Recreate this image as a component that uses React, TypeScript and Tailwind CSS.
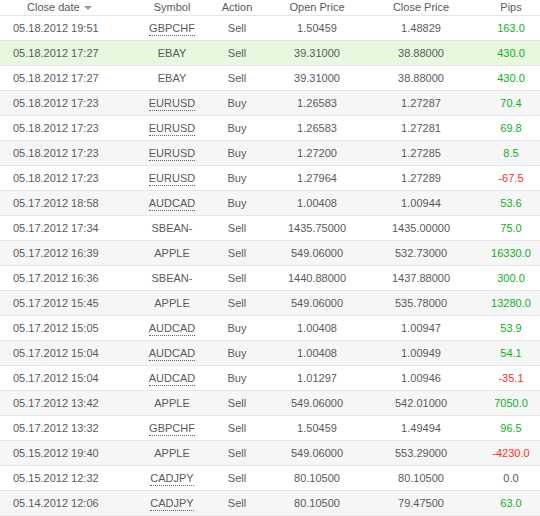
type Trade = {
  date: string;
  symbol: string;
  dotted: boolean;
  action: string;
  open: string;
  close: string;
  pips: string;
};

const trades: Trade[] = [
  { date: "05.18.2012 19:51", symbol: "GBPCHF", dotted: true, action: "Sell", open: "1.50459", close: "1.48829", pips: "163.0" },
  { date: "05.18.2012 17:27", symbol: "EBAY", dotted: false, action: "Sell", open: "39.31000", close: "38.88000", pips: "430.0" },
  { date: "05.18.2012 17:27", symbol: "EBAY", dotted: false, action: "Sell", open: "39.31000", close: "38.88000", pips: "430.0" },
  { date: "05.18.2012 17:23", symbol: "EURUSD", dotted: true, action: "Buy", open: "1.26583", close: "1.27287", pips: "70.4" },
  { date: "05.18.2012 17:23", symbol: "EURUSD", dotted: true, action: "Buy", open: "1.26583", close: "1.27281", pips: "69.8" },
  { date: "05.18.2012 17:23", symbol: "EURUSD", dotted: true, action: "Buy", open: "1.27200", close: "1.27285", pips: "8.5" },
  { date: "05.18.2012 17:23", symbol: "EURUSD", dotted: true, action: "Buy", open: "1.27964", close: "1.27289", pips: "-67.5" },
  { date: "05.17.2012 18:58", symbol: "AUDCAD", dotted: true, action: "Buy", open: "1.00408", close: "1.00944", pips: "53.6" },
  { date: "05.17.2012 17:34", symbol: "SBEAN-", dotted: false, action: "Sell", open: "1435.75000", close: "1435.00000", pips: "75.0" },
  { date: "05.17.2012 16:39", symbol: "APPLE", dotted: false, action: "Sell", open: "549.06000", close: "532.73000", pips: "16330.0" },
  { date: "05.17.2012 16:36", symbol: "SBEAN-", dotted: false, action: "Sell", open: "1440.88000", close: "1437.88000", pips: "300.0" },
  { date: "05.17.2012 15:45", symbol: "APPLE", dotted: false, action: "Sell", open: "549.06000", close: "535.78000", pips: "13280.0" },
  { date: "05.17.2012 15:05", symbol: "AUDCAD", dotted: true, action: "Buy", open: "1.00408", close: "1.00947", pips: "53.9" },
  { date: "05.17.2012 15:04", symbol: "AUDCAD", dotted: true, action: "Buy", open: "1.00408", close: "1.00949", pips: "54.1" },
  { date: "05.17.2012 15:04", symbol: "AUDCAD", dotted: true, action: "Buy", open: "1.01297", close: "1.00946", pips: "-35.1" },
  { date: "05.17.2012 13:42", symbol: "APPLE", dotted: false, action: "Sell", open: "549.06000", close: "542.01000", pips: "7050.0" },
  { date: "05.17.2012 13:32", symbol: "GBPCHF", dotted: true, action: "Sell", open: "1.50459", close: "1.49494", pips: "96.5" },
  { date: "05.15.2012 19:40", symbol: "APPLE", dotted: false, action: "Sell", open: "549.06000", close: "553.29000", pips: "-4230.0" },
  { date: "05.15.2012 12:32", symbol: "CADJPY", dotted: true, action: "Sell", open: "80.10500", close: "80.10500", pips: "0.0" },
  { date: "05.14.2012 12:06", symbol: "CADJPY", dotted: true, action: "Sell", open: "80.10500", close: "79.47500", pips: "63.0" },
];

function pipsColor(p: string) {
  if (p.startsWith("-")) return "text-[#ff2d2d]";
  if (parseFloat(p) === 0) return "text-[#5a5a5a]";
  return "text-[#12ad2b]";
}

const cols = "grid grid-cols-[144px_56px_74px_86px_122px_58px]";

export default function App() {
  return (
    <div className="w-[540px] bg-white text-[11px] text-[#5a5a5a] font-['Liberation_Sans',Arial,sans-serif]">
      <div className={`${cols} h-[16px] border-b border-[#e6e6e6] items-center leading-none`}>
        <div className="pl-[27px] flex items-center gap-[4px]">
          Close date
          <span className="w-0 h-0 border-l-[4px] border-r-[4px] border-t-[4px] border-l-transparent border-r-transparent border-t-[#9a9a9a] mt-[1px]" />
        </div>
        <div className="text-center">Symbol</div>
        <div className="text-center">Action</div>
        <div className="text-center">Open Price</div>
        <div className="text-center">Close Price</div>
        <div className="text-center">Pips</div>
      </div>
      {trades.map((t, i) => {
        const bg = i === 1 ? "bg-[#e6f8dd]" : i % 2 === 1 ? "bg-[#f6f6f6]" : "bg-white";
        return (
          <div key={i} className={`${cols} ${bg} h-[25px] border-b border-[#e6e6e6] items-center`}>
            <div className="pl-[13px]">{t.date}</div>
            <div className="text-center">
              <span className={t.dotted ? "border-b border-dotted border-[#666666] leading-[13px] inline-block" : ""}>
                {t.symbol}
              </span>
            </div>
            <div className="text-center">{t.action}</div>
            <div className="text-center">{t.open}</div>
            <div className="text-center">{t.close}</div>
            <div className={`text-center ${pipsColor(t.pips)}`}>{t.pips}</div>
          </div>
        );
      })}
    </div>
  );
}
